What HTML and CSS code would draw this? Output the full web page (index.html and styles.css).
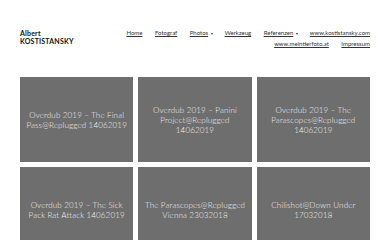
FILE: index.html
```html
<!doctype html>
<html lang="de">
<head>
  <meta charset="utf-8" />
  <meta name="viewport" content="width=device-width, initial-scale=1" />
  <title>Albert Kostistansky</title>
  <link rel="stylesheet" href="styles.css">
</head>
<body>
  <div class="page">
    <header class="top">
      <a class="brand" href="#">Albert<br>KOSTISTANSKY</a>
      <nav class="nav">
        <a href="#">Home</a>
        <a href="#">Fotograf</a>
        <a href="#" class="drop">Photos</a>
        <a href="#">Werkzeug</a>
        <a href="#" class="drop">Referenzen</a>
        <a href="#">www.kostistansky.com</a>
        <a href="#">www.meintierfoto.at</a>
        <a href="#">Impressum</a>
      </nav>
    </header>

    <main class="grid">
      <a class="tile" href="#"><span>Overdub 2019 – The Final Pass@Replugged 14062019</span></a>
      <a class="tile" href="#"><span>Overdub 2019 – Panini Project@Replugged 14062019</span></a>
      <a class="tile" href="#"><span>Overdub 2019 – The Parascopes@Replugged 14062019</span></a>
      <a class="tile" href="#"><span>Overdub 2019 – The Sick Pack Rat Attack 14062019</span></a>
      <a class="tile" href="#"><span>The Parascopes@Replugged Vienna 23032018</span></a>
      <a class="tile" href="#"><span>Chilishot@Down Under 17032018</span></a>
    </main>
  </div>
</body>
</html>
```

FILE: styles.css
```css
*{box-sizing:border-box}
html,body{margin:0; background:#fff}
body{font-family: Lato, "Liberation Sans", Arial, sans-serif; color:#222}

.page{padding:0 20px}

.top{display:flex; justify-content:space-between; align-items:flex-start; padding-top:29px; height:77px}

.brand{color:#111; text-decoration:none; font-weight:700; font-size:7px; line-height:8px; letter-spacing:.2px}

.nav{width:246px; display:flex; flex-wrap:wrap; justify-content:flex-end; column-gap:12.5px; row-gap:3px; font-size:6px; line-height:8px}
.nav a{color:#333; text-decoration:underline; text-underline-offset:1px}
.nav .drop{position:relative; margin-right:4px}
.nav .drop::after{content:""; position:absolute; right:-5px; top:4px; border:1.5px solid transparent; border-top:2px solid #333; border-bottom:0}

.grid{display:grid; grid-template-columns:repeat(3, 1fr); gap:5px}

.tile{height:85px; background:#6e6e6e; color:#f2f2f2; text-decoration:none; display:flex; align-items:center; justify-content:center; text-align:center; padding:0 4px; font-weight:300; font-size:8px; line-height:10px; letter-spacing:.15px}
```
